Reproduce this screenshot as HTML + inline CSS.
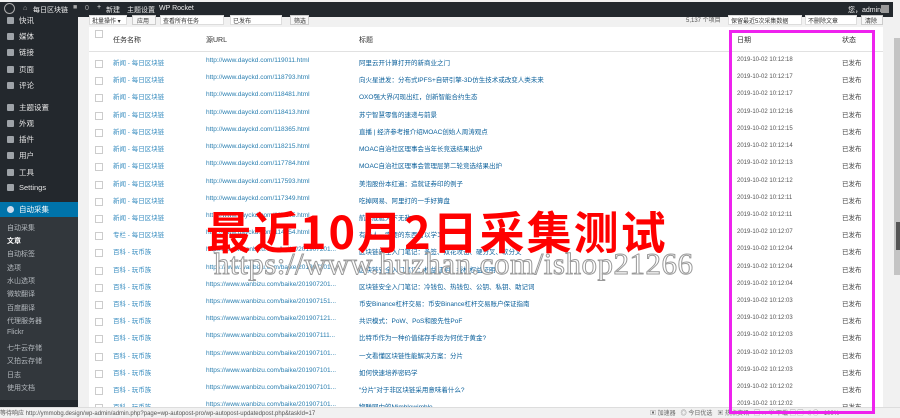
<!DOCTYPE html>
<html><head><meta charset="utf-8">
<style>
*{margin:0;padding:0;box-sizing:border-box}
body{width:900px;height:417px;overflow:hidden;background:#f1f1f1;font-family:"Liberation Sans","Noto Sans CJK SC",sans-serif;font-size:7px;position:relative;color:#333}
.abs{position:absolute;white-space:nowrap}
#bar{position:absolute;left:0;top:2px;width:893px;height:15px;background:#23282d;color:#eee;font-size:7px}
#side{position:absolute;left:0;top:17px;width:78px;height:390px;background:#23282d}
.mi{position:absolute;left:7px;color:#e6e6e6;font-size:7.5px}
.mi i{display:inline-block;width:7px;height:7px;background:#9ea3a8;margin-right:5px;vertical-align:-1px;border-radius:1px}
.si{position:absolute;left:7px;color:#b4b9be;font-size:7px}
#table{position:absolute;left:89px;top:27px;width:794px;height:380px;background:#fff}
.row{position:absolute;left:0;width:794px;height:17px;font-size:6.5px}
.cb{position:absolute;left:6px;top:3px;width:8px;height:8px;border:1px solid #ccc;background:#fff}
.c1{position:absolute;left:24px;color:#3a8ec0}
.c2{position:absolute;left:117px;color:#2a7fb0}
.c3{position:absolute;left:270px;color:#0a5f9a}
.c4{position:absolute;left:648px;color:#555;font-size:6px}
.c5{position:absolute;left:753px;color:#444}
</style></head><body>
<div id="bar">
<span class="abs" style="left:4px;top:1px;width:11px;height:11px;border-radius:50%;border:1.5px solid #aaa"></span>
<span class="abs" style="left:23px;top:3px;color:#aaa">⌂</span>
<span class="abs" style="left:33px;top:3px">每日区块链</span>
<span class="abs" style="left:73px;top:2px;color:#aaa">■</span><span class="abs" style="left:85px;top:3px;color:#aaa">0</span>
<span class="abs" style="left:97px;top:2px">+</span><span class="abs" style="left:106px;top:3px">新建</span>
<span class="abs" style="left:127px;top:3px">主题设置</span>
<span class="abs" style="left:159px;top:3px">WP Rocket</span>
<span class="abs" style="left:848px;top:3px">您，admin</span>
<span class="abs" style="left:881px;top:3px;width:8px;height:8px;background:#999"></span>
</div>
<div style="position:absolute;left:893px;top:0;width:7px;height:17px;background:#f1f1f1"></div>
<div style="position:absolute;left:894px;top:38px;width:6px;height:237px;background:#c4c4c4"></div>
<div style="position:absolute;left:896px;top:222px;width:4px;height:28px;background:#555"></div>
<div id="side">
<div class="mi" style="top:-2px"><i></i>快讯</div>
<div class="mi" style="top:14px"><i></i>媒体</div>
<div class="mi" style="top:30px"><i></i>链接</div>
<div class="mi" style="top:47px"><i></i>页面</div>
<div class="mi" style="top:63px"><i></i>评论</div>
<div class="mi" style="top:85px"><i></i>主题设置</div>
<div class="mi" style="top:101px"><i></i>外观</div>
<div class="mi" style="top:117px"><i></i>插件</div>
<div class="mi" style="top:133px"><i></i>用户</div>
<div class="mi" style="top:150px"><i></i>工具</div>
<div class="mi" style="top:166px"><i></i>Settings</div>
<div style="position:absolute;left:0;top:185px;width:78px;height:15px;background:#0073aa"></div>
<div class="mi" style="top:187px;color:#fff"><i style="border-radius:50%;background:#cde"></i>自动采集</div>
<div style="position:absolute;left:0;top:200px;width:78px;height:183px;background:#32373c"></div>
<div class="si" style="top:206px">自动采集</div>
<div class="si" style="top:219px;color:#fff;font-weight:bold">文章</div>
<div class="si" style="top:232px">自动标签</div>
<div class="si" style="top:246px">选项</div>
<div class="si" style="top:259px">水山选项</div>
<div class="si" style="top:272px">微软翻译</div>
<div class="si" style="top:286px">百度翻译</div>
<div class="si" style="top:299px">代理服务器</div>
<div class="si" style="top:312px">Flickr</div>
<div class="si" style="top:326px">七牛云存储</div>
<div class="si" style="top:339px">又拍云存储</div>
<div class="si" style="top:353px">日志</div>
<div class="si" style="top:366px">使用文档</div>
</div>
<div class="abs" style="left:89px;top:15px;width:38px;height:10px;background:#fff;border:1px solid #ddd;font-size:6px;padding-left:2px">批量操作 ▾</div>
<div class="abs" style="left:132px;top:15px;width:24px;height:10px;background:#f7f7f7;border:1px solid #ccc;font-size:6px;padding-left:4px">应用</div>
<div class="abs" style="left:160px;top:15px;width:64px;height:10px;background:#fff;border:1px solid #ddd;font-size:6px;padding-left:2px">查看所有任务</div>
<div class="abs" style="left:230px;top:15px;width:52px;height:10px;background:#fff;border:1px solid #ddd;font-size:6px;padding-left:2px">已发布</div>
<div class="abs" style="left:290px;top:15px;width:19px;height:10px;background:#f7f7f7;border:1px solid #ccc;font-size:6px;padding-left:3px">筛选</div>
<div class="abs" style="left:686px;top:15px;font-size:6px;color:#555">5,137 个项目</div>
<div class="abs" style="left:728px;top:15px;width:74px;height:10px;background:#fff;border:1px solid #ddd;font-size:6px;padding-left:2px">保留最近5次采集数据</div>
<div class="abs" style="left:805px;top:15px;width:52px;height:10px;background:#fff;border:1px solid #ddd;font-size:6px;padding-left:2px">不删除文章</div>
<div class="abs" style="left:861px;top:15px;width:22px;height:10px;background:#f7f7f7;border:1px solid #ccc;font-size:6px;padding-left:3px">清除</div>
<div id="table">
<div class="cb" style="top:3px;left:6px"></div>
<div class="abs" style="left:24px;top:8px;font-size:7px;color:#333">任务名称</div>
<div class="abs" style="left:117px;top:8px;font-size:7px;color:#333">源URL</div>
<div class="abs" style="left:270px;top:8px;font-size:7px;color:#333">标题</div>
<div class="abs" style="left:648px;top:8px;font-size:7px;color:#333">日期</div>
<div class="abs" style="left:753px;top:8px;font-size:7px;color:#333">状态</div>
<div style="position:absolute;left:0;top:24px;width:794px;height:1px;background:#e1e1e1"></div>
<div class="row" style="top:30px"><div class="cb"></div><span class="c1">新闻 - 每日区块链</span><span class="c2">http://www.dayckd.com/119011.html</span><span class="c3">阿里云开计算打开的新商业之门</span><span class="c4">2019-10-02 10:12:18</span><span class="c5">已发布</span></div>
<div class="row" style="top:47px"><div class="cb"></div><span class="c1">新闻 - 每日区块链</span><span class="c2">http://www.dayckd.com/118793.html</span><span class="c3">向火星进发：分布式IPFS+自研引擎-3D仿生技术或改变人类未来</span><span class="c4">2019-10-02 10:12:17</span><span class="c5">已发布</span></div>
<div class="row" style="top:64px"><div class="cb"></div><span class="c1">新闻 - 每日区块链</span><span class="c2">http://www.dayckd.com/118481.html</span><span class="c3">OXO强大界闪现出红，创新智能合约生态</span><span class="c4">2019-10-02 10:12:17</span><span class="c5">已发布</span></div>
<div class="row" style="top:82px"><div class="cb"></div><span class="c1">新闻 - 每日区块链</span><span class="c2">http://www.dayckd.com/118413.html</span><span class="c3">苏宁智慧零售的速递与前景</span><span class="c4">2019-10-02 10:12:16</span><span class="c5">已发布</span></div>
<div class="row" style="top:99px"><div class="cb"></div><span class="c1">新闻 - 每日区块链</span><span class="c2">http://www.dayckd.com/118365.html</span><span class="c3">直播 | 经济参考报介绍MOAC创始人周涛观点</span><span class="c4">2019-10-02 10:12:15</span><span class="c5">已发布</span></div>
<div class="row" style="top:116px"><div class="cb"></div><span class="c1">新闻 - 每日区块链</span><span class="c2">http://www.dayckd.com/118215.html</span><span class="c3">MOAC自治社区理事会当年长竞选结果出炉</span><span class="c4">2019-10-02 10:12:14</span><span class="c5">已发布</span></div>
<div class="row" style="top:133px"><div class="cb"></div><span class="c1">新闻 - 每日区块链</span><span class="c2">http://www.dayckd.com/117784.html</span><span class="c3">MOAC自治社区理事会管理层第二轮竞选结果出炉</span><span class="c4">2019-10-02 10:12:13</span><span class="c5">已发布</span></div>
<div class="row" style="top:151px"><div class="cb"></div><span class="c1">新闻 - 每日区块链</span><span class="c2">http://www.dayckd.com/117593.html</span><span class="c3">美泡股份本红遍：造就证券印的例子</span><span class="c4">2019-10-02 10:12:12</span><span class="c5">已发布</span></div>
<div class="row" style="top:168px"><div class="cb"></div><span class="c1">新闻 - 每日区块链</span><span class="c2">http://www.dayckd.com/117349.html</span><span class="c3">吃掉网易、阿里打的一手好算盘</span><span class="c4">2019-10-02 10:12:11</span><span class="c5">已发布</span></div>
<div class="row" style="top:185px"><div class="cb"></div><span class="c1">新闻 - 每日区块链</span><span class="c2">http://www.dayckd.com/117145.html</span><span class="c3">航母舰艇天下无敌</span><span class="c4">2019-10-02 10:12:11</span><span class="c5">已发布</span></div>
<div class="row" style="top:202px"><div class="cb"></div><span class="c1">专栏 - 每日区块链</span><span class="c2">http://www.dayckd.com/114954.html</span><span class="c3">有钱人一定要的东西可以学习</span><span class="c4">2019-10-02 10:12:07</span><span class="c5">已发布</span></div>
<div class="row" style="top:219px"><div class="cb"></div><span class="c1">百科 - 玩币族</span><span class="c2">https://www.wanbizu.com/baike/201907201...</span><span class="c3">区块链安全入门笔记：多签、双花攻击、硬分叉、软分叉</span><span class="c4">2019-10-02 10:12:04</span><span class="c5">已发布</span></div>
<div class="row" style="top:237px"><div class="cb"></div><span class="c1">百科 - 玩币族</span><span class="c2">https://www.wanbizu.com/baike/201907201...</span><span class="c3">区块链安全入门笔记：权益证明、授权权益证明</span><span class="c4">2019-10-02 10:12:04</span><span class="c5">已发布</span></div>
<div class="row" style="top:254px"><div class="cb"></div><span class="c1">百科 - 玩币族</span><span class="c2">https://www.wanbizu.com/baike/201907201...</span><span class="c3">区块链安全入门笔记：冷钱包、热钱包、公钥、私钥、助记词</span><span class="c4">2019-10-02 10:12:04</span><span class="c5">已发布</span></div>
<div class="row" style="top:271px"><div class="cb"></div><span class="c1">百科 - 玩币族</span><span class="c2">https://www.wanbizu.com/baike/201907151...</span><span class="c3">币安Binance杠杆交易：币安Binance杠杆交易账户保证指南</span><span class="c4">2019-10-02 10:12:03</span><span class="c5">已发布</span></div>
<div class="row" style="top:288px"><div class="cb"></div><span class="c1">百科 - 玩币族</span><span class="c2">https://www.wanbizu.com/baike/201907121...</span><span class="c3">共识模式：PoW、PoS和股先性PoF</span><span class="c4">2019-10-02 10:12:03</span><span class="c5">已发布</span></div>
<div class="row" style="top:305px"><div class="cb"></div><span class="c1">百科 - 玩币族</span><span class="c2">https://www.wanbizu.com/baike/201907111...</span><span class="c3">比特币作为一种价值储存手段为何优于黄金?</span><span class="c4">2019-10-02 10:12:03</span><span class="c5">已发布</span></div>
<div class="row" style="top:323px"><div class="cb"></div><span class="c1">百科 - 玩币族</span><span class="c2">https://www.wanbizu.com/baike/201907101...</span><span class="c3">一文看懂区块链性能解决方案：分片</span><span class="c4">2019-10-02 10:12:03</span><span class="c5">已发布</span></div>
<div class="row" style="top:340px"><div class="cb"></div><span class="c1">百科 - 玩币族</span><span class="c2">https://www.wanbizu.com/baike/201907101...</span><span class="c3">如何快速培养密码学</span><span class="c4">2019-10-02 10:12:03</span><span class="c5">已发布</span></div>
<div class="row" style="top:357px"><div class="cb"></div><span class="c1">百科 - 玩币族</span><span class="c2">https://www.wanbizu.com/baike/201907101...</span><span class="c3">“分片”对于非区块链采用意味着什么?</span><span class="c4">2019-10-02 10:12:02</span><span class="c5">已发布</span></div>
<div class="row" style="top:374px"><div class="cb"></div><span class="c1">百科 - 玩币族</span><span class="c2">https://www.wanbizu.com/baike/201907101...</span><span class="c3">物联网中的Mimblewimble</span><span class="c4">2019-10-02 10:12:02</span><span class="c5">已发布</span></div>
</div>
<div style="position:absolute;left:0;top:407px;width:900px;height:10px;background:#f1f1f1;border-top:1px solid #ddd"></div>
<div class="abs" style="left:0;top:408px;font-size:6px;color:#555;background:#f1f1f1">等待响应 http://ymmobg.design/wp-admin/admin.php?page=wp-autopost-pro/wp-autopost-updatedpost.php&amp;taskId=17</div>
<div class="abs" style="left:650px;top:408px;font-size:6px;color:#666">▣ 加速器 &nbsp; ◎ 今日优选 &nbsp; ▣ 热点资讯 &nbsp; ▢ ✕ ♡ 下载 ▢ ▢ ◁ ◯ &nbsp; 100%</div>
<div style="position:absolute;left:729px;top:30px;width:146px;height:384px;border:3px solid #ee22ee"></div>
<div class="abs" style="left:206px;top:200px;font-size:45px;font-weight:bold;color:#ff0000;letter-spacing:2px;font-family:'Noto Sans CJK SC',sans-serif;line-height:60px">最近10月2日采集测试</div>
<div class="abs" style="left:214px;top:249px;font-size:31px;font-family:'Liberation Serif',serif;color:#fff;-webkit-text-stroke:1px #999;line-height:30px;letter-spacing:0.5px">https://www.huzhan.com/ishop21266</div>
</body></html>
